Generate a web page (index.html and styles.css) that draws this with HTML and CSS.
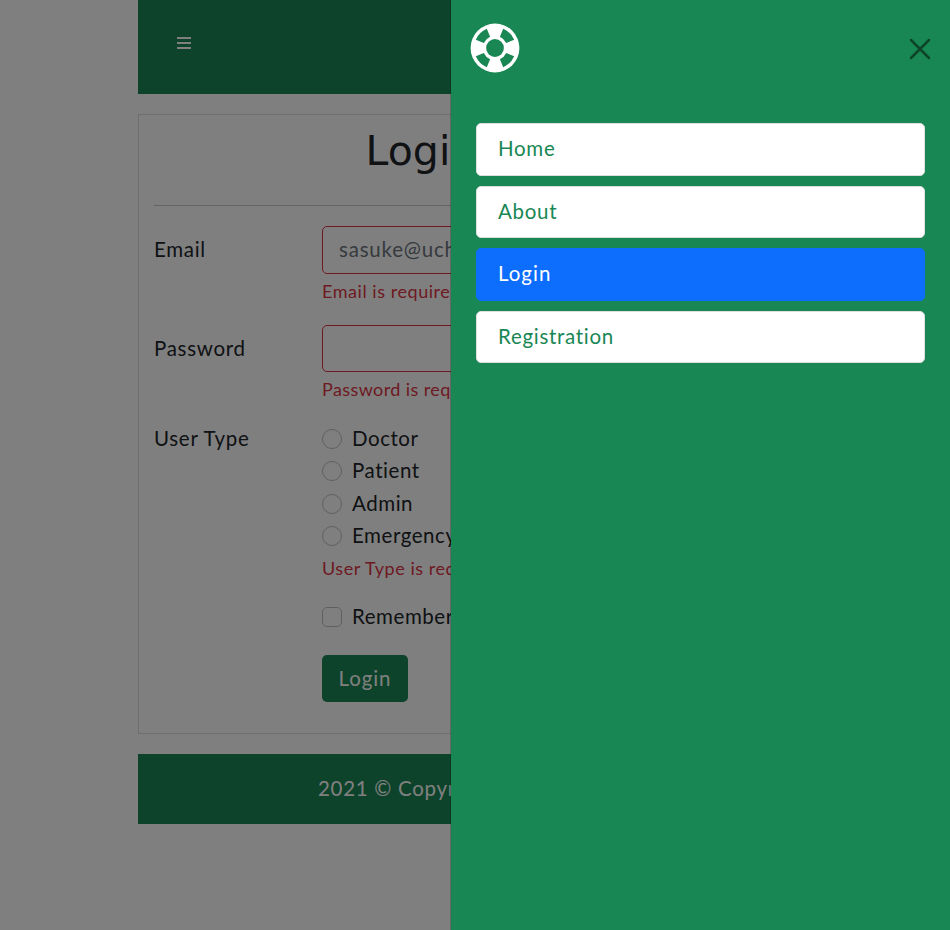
FILE: index.html
```html
<!DOCTYPE html>
<html lang="en">
<head>
<meta charset="utf-8">
<title>Login</title>
<link rel="stylesheet" href="styles.css">
</head>
<body>
<div class="container">
  <header class="topbar">
    <svg class="menu-icon" width="14" height="12" viewBox="0 0 14 12"><path d="M0 0h14v2H0zM0 5h14v2H0zM0 10h14v2H0z" fill="currentColor"/></svg>
  </header>
  <main class="card">
    <h1 class="title">Login</h1>
    <hr class="rule">
    <form>
      <div class="row">
        <label class="label" for="email">Email</label>
        <div>
          <input class="input" id="email" type="email" placeholder="sasuke@uchiha.com">
          <div class="error">Email is required</div>
        </div>
      </div>
      <div class="row">
        <label class="label" for="password">Password</label>
        <div>
          <input class="input input-password" id="password" type="password">
          <div class="error error-password">Password is required</div>
        </div>
      </div>
      <div class="row types">
        <span class="label label-type">User Type</span>
        <div>
          <label class="option"><input type="radio" name="type" class="radio"><span>Doctor</span></label>
          <label class="option patient"><input type="radio" name="type" class="radio"><span>Patient</span></label>
          <label class="option"><input type="radio" name="type" class="radio"><span>Admin</span></label>
          <label class="option"><input type="radio" name="type" class="radio"><span>Emergency</span></label>
          <div class="error error-type">User Type is required</div>
        </div>
      </div>
      <div class="actions">
        <label class="option"><input type="checkbox" class="checkbox"><span>Remember</span></label>
        <button class="submit" type="button">Login</button>
      </div>
    </form>
  </main>
  <footer class="footer">2021 © Copyright</footer>
</div>
<div class="backdrop"></div>
<aside class="drawer">
  <div class="drawer-head">
    <svg class="logo" width="50" height="50" viewBox="-25 -25 50 50">
      <circle r="24.4" fill="#fff"/>
      <g fill="#198754">
        <path id="gap" d="M8.2 -19.2Q15.8 -16 19.2 -8.2L11.2 -4.9Q9.2 -9.2 4.9 -11.2Z"/>
        <use href="#gap" transform="rotate(90)"/>
        <use href="#gap" transform="rotate(180)"/>
        <use href="#gap" transform="rotate(270)"/>
        <circle r="8.9"/>
      </g>
    </svg>
    <svg class="close" width="22" height="22" viewBox="-1 -1 22 22"><path d="M1 1l18 18M19 1L1 19" stroke="#0d442a" stroke-width="2.5" stroke-linecap="round"/></svg>
  </div>
  <nav class="nav">
    <a class="item">Home</a>
    <a class="item">About</a>
    <a class="item active">Login</a>
    <a class="item">Registration</a>
  </nav>
</aside>
</body>
</html>
```
FILE: styles.css
```css
* { box-sizing: border-box; }
html { overflow: hidden; }
body {
  margin: 0;
  height: 930px;
  overflow: hidden;
  background: #fff;
  color: #212529;
  font: 20.5px/32px Lato, "Liberation Sans", sans-serif;
  letter-spacing: 0.7px;
}
.container { width: 566px; margin-left: 138px; }
.topbar { height: 94px; padding: 37px 39px; background: #198754; color: #fff; }
.menu-icon { display: block; }
.card {
  height: 620px;
  margin: 20px 0;
  padding: 0 15px;
  border: 1px solid #dfdfdf;
}
.title {
  margin: 0;
  height: 90px;
  text-align: center;
  font: 400 41px/72px "DejaVu Sans", "Open Sans", sans-serif;
  letter-spacing: 0.1px;
}
.rule { height: 1px; margin: 0 0 20px; border: 0; background: #c8c9ca; }
.row { display: grid; grid-template-columns: 168px 1fr; margin-bottom: 15px; }
.label { line-height: 46px; }
.types { margin-bottom: 16px; }
.label-type { line-height: 30px; }
.input {
  display: block;
  width: 100%;
  height: 48px;
  padding: 0 16px 2px;
  border: 1px solid #dc3545;
  border-radius: 5px;
  background: #fff;
  font: inherit;
  letter-spacing: 0.8px;
}
.input-password { height: 47px; }
.input::placeholder { color: #6c757d; opacity: 1; }
.error { height: 36px; font-size: 18px; line-height: 34px; color: #dc3545; letter-spacing: 0.55px; white-space: nowrap; }
.error-password { letter-spacing: 0.4px; }
.error-type { height: 32.4px; line-height: 30px; }
.option { display: flex; align-items: center; gap: 10px; height: 32.4px; }
.patient { position: relative; top: -0.5px; }
.option span { padding-bottom: 2px; line-height: 30px; letter-spacing: 0.55px; }
.radio, .checkbox {
  appearance: none;
  width: 20px;
  height: 20px;
  margin: 0;
  border: 1px solid #bfbfbf;
  border-radius: 50%;
  background: #fff;
}
.checkbox { border-radius: 5px; }
.actions { margin-left: 168px; }
.submit {
  display: block;
  width: 86px;
  height: 47px;
  margin-top: 21.6px;
  padding: 0;
  border: 0;
  border-radius: 5px;
  background: #198754;
  color: #fff;
  font: inherit;
  letter-spacing: 0.9px;
}
.footer { height: 70px; padding-left: 180px; background: #198754; color: #fff; line-height: 68px; }
.backdrop { position: fixed; inset: 0; background: rgba(0, 0, 0, 0.5); }
.drawer {
  position: fixed;
  top: 0;
  right: 0;
  bottom: 0;
  width: 500px;
  border-left: 1px solid rgba(0, 0, 0, 0.2);
  background: #198754;
  background-clip: padding-box;
}
.drawer-head { display: flex; align-items: center; justify-content: space-between; height: 97px; padding: 0 19px; }
.logo { margin-bottom: 1px; }
.nav { display: flex; flex-direction: column; gap: 10px; padding: 26.2px 25px 0; }
.item {
  height: 52.5px;
  padding-left: 21px;
  border: 1px solid #dfdfdf;
  border-radius: 5px;
  background: #fff;
  color: #198754;
  line-height: 49px;
}
.active { border-color: #0d6efd; background: #0d6efd; color: #fff; letter-spacing: 1px; }
```
